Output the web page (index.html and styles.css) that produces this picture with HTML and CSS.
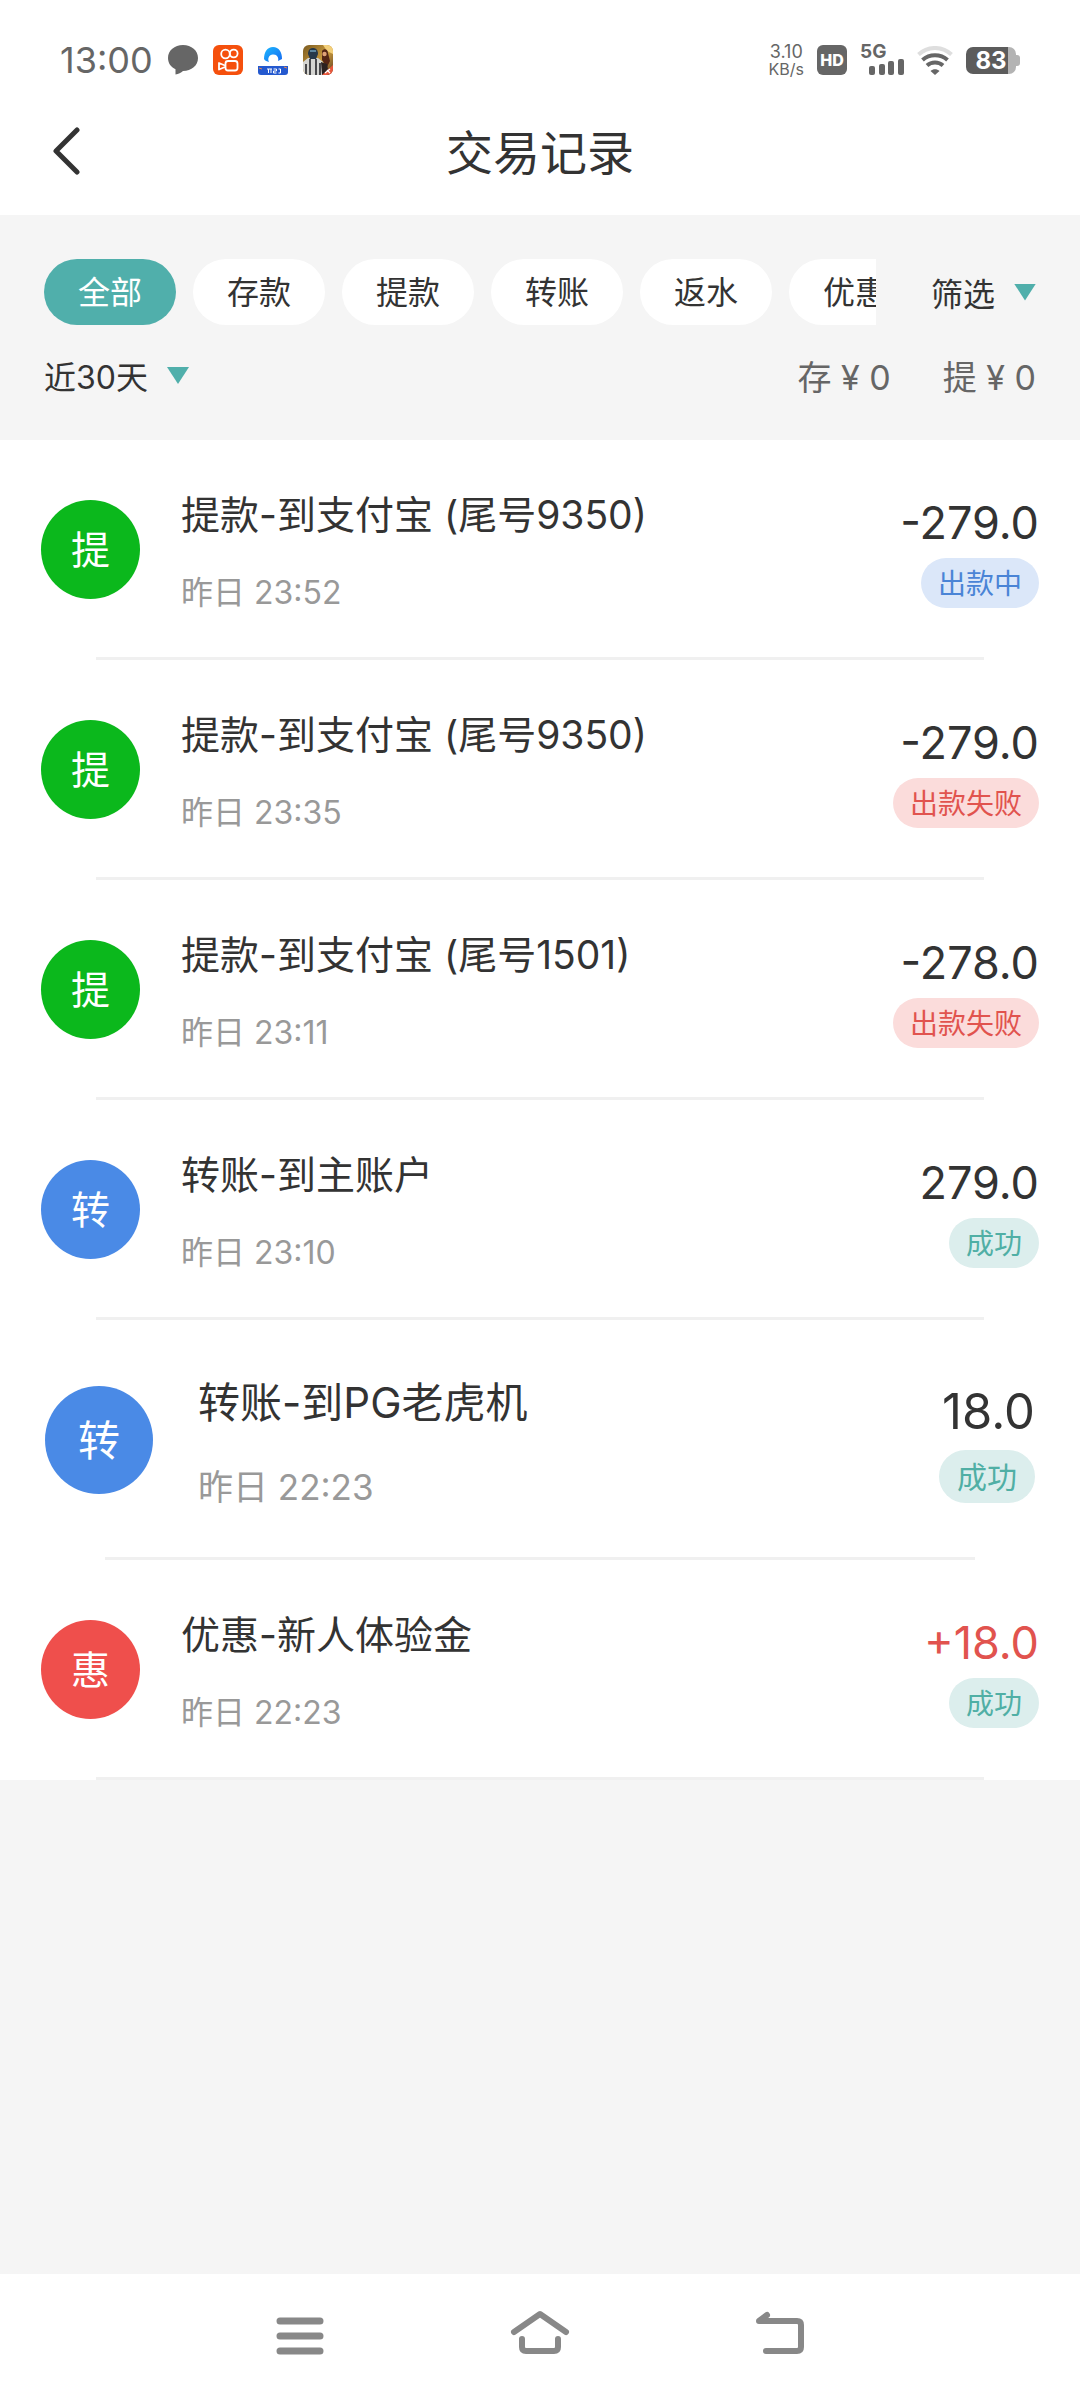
FILE: index.html
```html
<!DOCTYPE html>
<html lang="zh-CN">
<head>
    <meta charset="UTF-8">
    <meta name="viewport" content="width=device-width, initial-scale=1.0">
    <title>交易记录</title>
    <link rel="stylesheet" href="styles.css">
</head>
<body>
    <div class="status-bar">
        <div class="status-left">
            <span class="clock">13:00</span>
            <svg class="app-icon" viewBox="0 0 30 30">
                <path d="M15 0C6.500 0 0 5.500 0 13c0 5 2.800 9 7.500 11.300V29.500c3-.5 5.500-1.500 7.500-3.500C23.500 26 30 20.500 30 13S23.500 0 15 0z" fill="#666"/>
            </svg>
            <svg class="app-icon" viewBox="0 0 30 30">
                <rect width="30" height="30" rx="6" fill="#f5500d"/>
                <g fill="none" stroke="#fff" stroke-width="1.800" stroke-linejoin="round">
                    <circle cx="12.500" cy="9" r="4.300"/>
                    <circle cx="20.700" cy="8.500" r="3.900"/>
                    <rect x="12.500" y="16" width="12" height="9.500" rx="2.500"/>
                    <path d="M12 20.500l-6-2.500v6.500l6-2.500"/>
                </g>
            </svg>
            <svg class="app-icon" viewBox="0 0 30 30">
                <defs>
                    <linearGradient id="cloud" x1="0" y1="0" x2="1" y2="1">
                        <stop offset="0" stop-color="#1cb8ff"/>
                        <stop offset="1" stop-color="#1668f0"/>
                    </linearGradient>
                </defs>
                <path d="M6 14C6 7 9 2 15 2s9 5 9 12l-4 2a5 5 0 1 0-9 1c-2-1-4-1-5-3z" fill="url(#cloud)"/>
                <path d="M0 21h30v6a3 3 0 0 1-3 3H3a3 3 0 0 1-3-3z" fill="#2459cf"/>
                <path d="M9 24h5M10.500 24v4M13 24v4M15.500 24h3v2h-3v2h3M20.500 24h2v4h-2" stroke="#fff" stroke-width="1" fill="none"/>
                <path d="M1 23l3 1M26 22l3 1" stroke="#f08a4b" stroke-width="1"/>
            </svg>
            <svg class="app-icon" viewBox="0 0 30 30">
                <defs>
                    <linearGradient id="sand" x1="0" y1="0" x2="1" y2="1">
                        <stop offset="0" stop-color="#7a5a20"/>
                        <stop offset=".55" stop-color="#c99a3d"/>
                        <stop offset="1" stop-color="#5b3a20"/>
                    </linearGradient>
                    <clipPath id="tile"><rect width="30" height="30" rx="6"/></clipPath>
                </defs>
                <g clip-path="url(#tile)">
                    <rect width="30" height="30" fill="url(#sand)"/>
                    <path d="M20 0h10v9l-6-3z" fill="#f3cf7a"/>
                    <path d="M0 30V17l5-4h10l5 4v13z" fill="#d5d5d2"/>
                    <path d="M3 19v11M7 14v16M13 14v16M17 18v12" stroke="#25252a" stroke-width="1.600"/>
                    <path d="M5 9c0-4 2-6 5-6s5 2 5 6l-2 5H7z" fill="#26384a"/>
                    <path d="M7 6h6" stroke="#70a0bd" stroke-width="1.500"/>
                    <path d="M19 6c2-3 6-2 6 2l2 8-3 6-5-7z" fill="#542514"/>
                    <circle cx="21.500" cy="9" r="2.200" fill="#dfa176"/>
                    <path d="M18 17l6 2 2 11h-7z" fill="#2b2220"/>
                    <path d="M30 20v10H19z" fill="#e8583d"/>
                    <path d="M22 28l5-4M24 25l3 3" stroke="#fff" stroke-width="1.200"/>
                </g>
            </svg>
        </div>
        <div class="status-right">
            <div class="net-speed">
                <span>3.10</span>
                <span class="net-unit">KB/s</span>
            </div>
            <span class="hd">HD</span>
            <div class="signal">
                <span class="signal-type">5G</span>
                <svg class="signal-bars" viewBox="0 0 35 16" fill="#666">
                    <rect x="0" y="7" width="6" height="9" rx="2"/>
                    <rect x="10" y="5" width="6" height="11" rx="2"/>
                    <rect x="19" y="2" width="6" height="14" rx="2"/>
                    <rect x="29" y="0" width="6" height="16" rx="2"/>
                </svg>
            </div>
            <svg class="wifi" viewBox="0 0 36 29" fill="none" stroke="#666" stroke-width="4">
                <path d="M1.500 8.500C11-.2 25-.2 34.500 8.500" stroke="#dedede"/>
                <path d="M5.500 14C12.500 7.700 23.500 7.700 30.500 14"/>
                <path d="M10 19.500c4.500-4 11.500-4 16 0"/>
                <path d="M13.500 25L18 29l4.500-4c-2.500-2.300-6.500-2.300-9 0z" fill="#666" stroke="none"/>
            </svg>
            <div class="battery"><span class="battery-level">83</span></div>
        </div>
    </div>

    <header class="header">
        <button class="back" aria-label="返回">
            <svg viewBox="0 0 28 50" fill="none" stroke="#333" stroke-width="5" stroke-linecap="round" stroke-linejoin="round">
                <path d="M25 4L4 25l21 21"/>
            </svg>
        </button>
        <h1>交易记录</h1>
    </header>

    <section class="filters">
        <div class="filter-row">
            <div class="chips">
                <button class="chip active">全部</button>
                <button class="chip">存款</button>
                <button class="chip">提款</button>
                <button class="chip">转账</button>
                <button class="chip">返水</button>
                <button class="chip">优惠</button>
            </div>
            <button class="filter-btn">筛选 <span class="arrow"></span></button>
        </div>
        <div class="summary-row">
            <label class="period">
                <select aria-label="时间范围">
                    <option>近30天</option>
                </select>
                <span class="arrow"></span>
            </label>
            <div class="totals">
                <span>存 ¥ 0</span>
                <span>提 ¥ 0</span>
            </div>
        </div>
    </section>

    <main>
        <ul class="records">
            <li class="record">
                <span class="avatar green">提</span>
                <div class="info">
                    <div class="title">提款-到支付宝 (尾号9350)</div>
                    <div class="time">昨日 23:52</div>
                </div>
                <div class="result">
                    <div class="amount">-279.0</div>
                    <span class="badge pending">出款中</span>
                </div>
            </li>
            <li class="record">
                <span class="avatar green">提</span>
                <div class="info">
                    <div class="title">提款-到支付宝 (尾号9350)</div>
                    <div class="time">昨日 23:35</div>
                </div>
                <div class="result">
                    <div class="amount">-279.0</div>
                    <span class="badge failed">出款失败</span>
                </div>
            </li>
            <li class="record">
                <span class="avatar green">提</span>
                <div class="info">
                    <div class="title">提款-到支付宝 (尾号1501)</div>
                    <div class="time">昨日 23:11</div>
                </div>
                <div class="result">
                    <div class="amount">-278.0</div>
                    <span class="badge failed">出款失败</span>
                </div>
            </li>
            <li class="record">
                <span class="avatar blue">转</span>
                <div class="info">
                    <div class="title">转账-到主账户</div>
                    <div class="time">昨日 23:10</div>
                </div>
                <div class="result">
                    <div class="amount">279.0</div>
                    <span class="badge success">成功</span>
                </div>
            </li>
            <li class="record large">
                <span class="avatar blue">转</span>
                <div class="info">
                    <div class="title">转账-到PG老虎机</div>
                    <div class="time">昨日 22:23</div>
                </div>
                <div class="result">
                    <div class="amount">18.0</div>
                    <span class="badge success">成功</span>
                </div>
            </li>
            <li class="record">
                <span class="avatar red">惠</span>
                <div class="info">
                    <div class="title">优惠-新人体验金</div>
                    <div class="time">昨日 22:23</div>
                </div>
                <div class="result">
                    <div class="amount plus">+18.0</div>
                    <span class="badge success">成功</span>
                </div>
            </li>
        </ul>
    </main>

    <nav class="nav-bar">
        <button aria-label="最近任务">
            <svg viewBox="0 0 60 60">
                <path d="M10 15h40M10 30h40M10 45h40" stroke-width="7"/>
            </svg>
        </button>
        <button aria-label="主屏幕">
            <svg viewBox="0 0 60 60">
                <path d="M4 26L30 8l26 18M12 33v8q0 4 4 4h28q4 0 4-4v-8"/>
            </svg>
        </button>
        <button aria-label="返回上一级">
            <svg viewBox="0 0 60 60">
                <path d="M16 45h31q4 0 4-4V19q0-4-4-4H9l8-6"/>
            </svg>
        </button>
    </nav>
</body>
</html>
```
FILE: styles.css
```css
* {
    box-sizing: border-box;
}
body {
    margin: 0;
    min-height: 100vh;
    display: flex;
    flex-direction: column;
    background: #f5f5f5;
    color: #333;
    font-family: Inter, "Noto Sans CJK SC", sans-serif;
}
button, select {
    border: none;
    padding: 0;
    background: none;
    color: inherit;
    font: inherit;
    cursor: pointer;
}

/* status bar */
.status-bar {
    display: flex;
    justify-content: space-between;
    align-items: center;
    height: 90px;
    padding: 30px 60px 0;
    background: #fff;
    color: #666;
}
.status-left {
    display: flex;
    align-items: center;
    gap: 15px;
}
.clock {
    font-size: 36px;
    line-height: 40px;
}
.app-icon {
    width: 30px;
    height: 30px;
}
.status-right {
    display: flex;
    align-items: center;
    gap: 13px;
}
.net-speed {
    display: flex;
    flex-direction: column;
    align-items: center;
    font-size: 18px;
    line-height: 18px;
}
.net-unit {
    font-size: 16px;
    line-height: 16px;
}
.hd {
    width: 30px;
    height: 30px;
    border-radius: 6px;
    background: #666;
    color: #fff;
    font-size: 16px;
    font-weight: 800;
    line-height: 30px;
    text-align: center;
}
.signal {
    display: flex;
    flex-direction: column;
    height: 30px;
}
.signal-type {
    font-size: 19px;
    font-weight: 700;
    line-height: 14px;
}
.signal-bars {
    width: 35px;
    height: 16px;
    margin-left: 9px;
}
.wifi {
    width: 36px;
    height: 29px;
}
.battery {
    position: relative;
    width: 50px;
    height: 27px;
    margin-right: 4px;
    border-radius: 7px;
    background: linear-gradient(to right, #5c5c5c 84%, #b3b3b3 84%);
    text-align: center;
}
.battery::after {
    content: "";
    position: absolute;
    right: -4px;
    top: 8px;
    width: 4px;
    height: 11px;
    border-radius: 0 3px 3px 0;
    background: #b3b3b3;
}
.battery-level {
    color: #fff;
    font-size: 24px;
    font-weight: 700;
    line-height: 27px;
}

/* header */
.header {
    position: relative;
    height: 125px;
    background: #fff;
    text-align: center;
}
.header h1 {
    margin: 0;
    font-size: 47px;
    font-weight: 400;
    line-height: 126px;
}
.back {
    position: absolute;
    left: 52px;
    top: 36px;
}
.back svg {
    display: block;
    width: 28px;
    height: 50px;
}

/* filters */
.filters {
    padding: 44px 44px 40px;
    font-size: 32px;
}
.filter-row {
    display: flex;
    align-items: center;
    gap: 55px;
}
.chips {
    display: flex;
    flex: 1;
    gap: 17px;
    min-width: 0;
    overflow: hidden;
}
.chip {
    flex: none;
    padding: 2px 34px 0;
    border-radius: 33px;
    background: #fff;
    line-height: 64px;
}
.chip.active {
    background: #50afab;
    color: #fff;
}
.filter-btn, .period {
    display: flex;
    align-items: center;
    gap: 19px;
    white-space: nowrap;
}
.arrow {
    width: 22px;
    height: 17px;
    background: #50afab;
    clip-path: polygon(0 0, 100% 0, 50% 100%);
}
.summary-row {
    display: flex;
    justify-content: space-between;
    align-items: center;
    margin-top: 26px;
}
.period select {
    appearance: none;
    padding-top: 4px;
    line-height: 44px;
}
.totals {
    display: flex;
    gap: 52px;
    color: #666;
    font-size: 34px;
}

/* records */
.records {
    margin: 0;
    padding: 0;
    list-style: none;
    background: #fff;
}
.record {
    position: relative;
    display: flex;
    gap: 41px;
    height: 220px;
    padding: 50px 41px 0;
}
.record::after {
    content: "";
    position: absolute;
    left: 96px;
    right: 96px;
    bottom: 0;
    height: 3px;
    background: #f0f0f0;
}
.avatar {
    flex: none;
    width: 99px;
    height: 99px;
    margin-top: 10px;
    border-radius: 50%;
    color: #fff;
    font-size: 39px;
    line-height: 100px;
    text-align: center;
}
.green { background: #0bb81c; }
.blue { background: #4a8ae6; }
.red { background: #ef4f4c; }
.info {
    flex: 1;
}
.title {
    font-size: 39px;
    line-height: 50px;
}
.time {
    margin-top: 30px;
    color: #999;
    font-size: 32px;
    line-height: 46px;
}
.result {
    display: flex;
    flex-direction: column;
    align-items: flex-end;
    gap: 6px;
    padding-top: 4px;
}
.amount {
    font-size: 45px;
    line-height: 58px;
}
.amount.plus {
    color: #e1534e;
}
.badge {
    padding: 2px 17px 0;
    border-radius: 25px;
    font-size: 28px;
    line-height: 48px;
}
.pending {
    background: #dbe7f9;
    color: #4a84d6;
}
.failed {
    background: #fbdcdb;
    color: #e1534e;
}
.success {
    background: #dceeed;
    color: #50afa5;
}

/* enlarged row */
.record.large {
    gap: 45px;
    height: 240px;
    padding: 56px 45px 0;
}
.large::after {
    left: 105px;
    right: 105px;
}
.large .avatar {
    width: 108px;
    height: 108px;
    font-size: 42px;
    line-height: 110px;
}
.large .title {
    font-size: 42px;
    line-height: 54px;
}
.large .time {
    margin-top: 32px;
    font-size: 35px;
    line-height: 50px;
}
.large .amount {
    font-size: 49px;
    line-height: 64px;
}
.large .badge {
    padding: 2px 18px 0;
    border-radius: 27px;
    font-size: 30px;
    line-height: 51px;
}

/* system navigation */
.nav-bar {
    display: flex;
    justify-content: center;
    margin-top: auto;
    height: 126px;
    padding-top: 2px;
    background: #fff;
}
.nav-bar button {
    width: 240px;
}
.nav-bar svg {
    width: 60px;
    height: 60px;
    fill: none;
    stroke: #888;
    stroke-width: 6;
    stroke-linecap: round;
    stroke-linejoin: round;
}
```
